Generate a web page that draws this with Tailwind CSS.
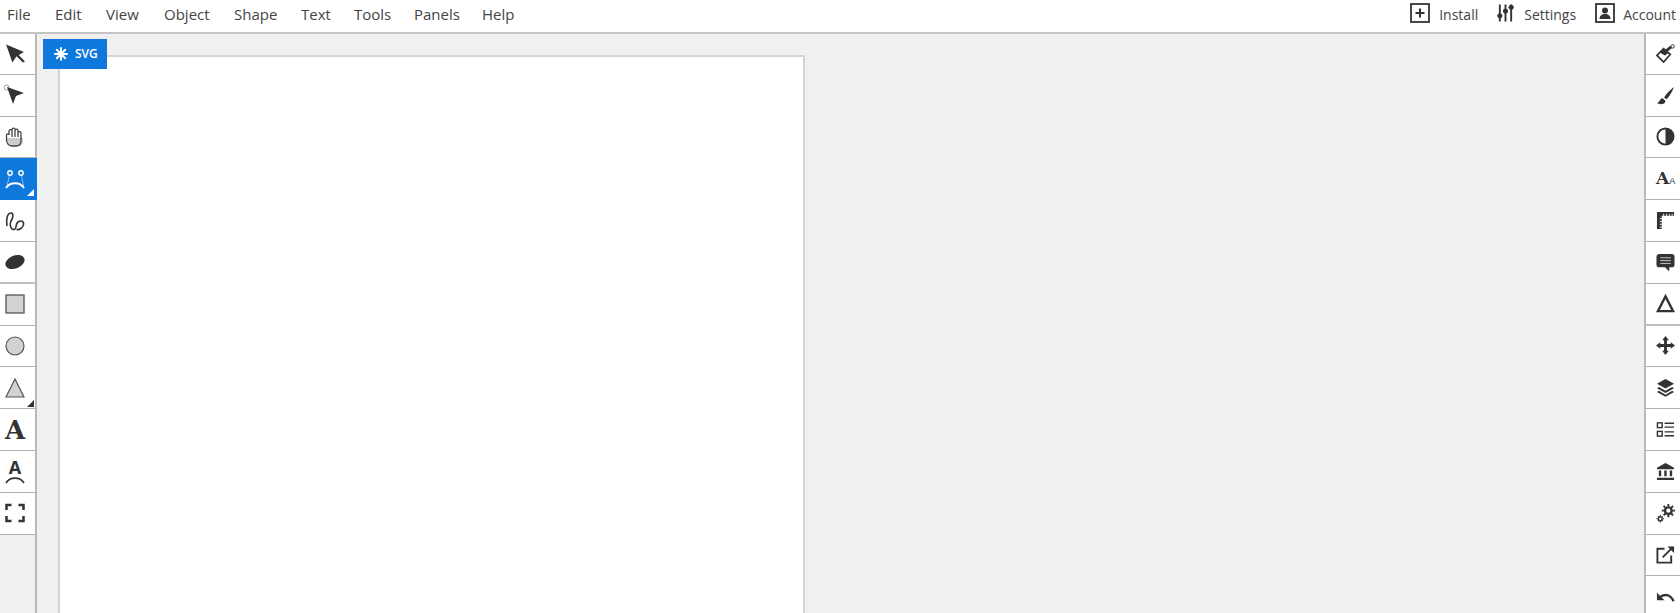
<!DOCTYPE html>
<html lang="en">
<head>
  <meta charset="UTF-8" />
  <title>SVG Editor</title>
  <script src="https://cdn.jsdelivr.net/npm/@tailwindcss/browser@4"></script>
</head>
<body class="h-[613px] overflow-hidden bg-[#f0f0f0] font-['Open_Sans','Noto_Sans',sans-serif] text-[#444]">

  <!-- Top menu -->
  <header class="h-[34px] pb-[4px] bg-white border-b-2 border-[#c4c4c4] flex items-center justify-between text-[15px]">
    <nav class="flex pl-[7px]">
      <a class="w-[48px]">File</a>
      <a class="w-[51px]">Edit</a>
      <a class="w-[58px]">View</a>
      <a class="w-[70px]">Object</a>
      <a class="w-[67px]">Shape</a>
      <a class="w-[53px]">Text</a>
      <a class="w-[60px]">Tools</a>
      <a class="w-[68px]">Panels</a>
      <a>Help</a>
    </nav>
    <div class="flex items-center text-[14px] pr-[4px]">
      <svg class="w-[20px] h-[20px] mr-[9px] mb-[2px]" viewBox="0 0 20 20" fill="none" stroke="#333"><rect x="1" y="1" width="18" height="18" stroke-width="1.800"/><path d="M10 5.500v9M5.500 10h9" stroke-width="2"/></svg>
      <span class="mr-[19px]">Install</span>
      <svg class="w-[17px] h-[20px] mr-[10px] mb-[2px]" viewBox="0 0 18 20" fill="#333" stroke="#333"><path d="M3 1v18M9 1v18M15 1v18" stroke-width="2"/><circle cx="3" cy="13" r="2.300"/><circle cx="9" cy="8" r="2.300"/><circle cx="15" cy="4" r="2.300"/></svg>
      <span class="mr-[19px]">Settings</span>
      <svg class="w-[20px] h-[20px] mr-[8px] mb-[2px]" viewBox="0 0 20 20" fill="#333"><rect x="1" y="1" width="18" height="18" fill="none" stroke="#333" stroke-width="1.800"/><circle cx="10" cy="7.500" r="3"/><path d="M4.500 16c0-3.500 2.500-5 5.500-5s5.500 1.500 5.500 5z"/></svg>
      <span>Account</span>
    </div>
  </header>

  <div class="flex h-[579px]">
    <!-- Left tools -->
    <aside class="w-[37px] shrink-0 border-r-2 border-[#b8b8b8]">
      <div class="h-[40.8px] bg-white border-b border-[#b0b0b0] flex items-center pl-[4px]">
        <svg class="w-[21px] h-[21px]" viewBox="0 0 20 20" fill="#333"><path d="M2 1.500L19 8.500 14 11.500 20 17.500 18 18.500 12 12.500 8 18.500z"/></svg>
      </div>
      <div class="h-[41.8px] bg-white border-b border-[#b0b0b0] flex items-center pl-[3px]">
        <svg class="w-[22px] h-[22px]" viewBox="0 0 22 22"><circle cx="3.500" cy="3.500" r="2.500" fill="none" stroke="#999" stroke-width="1"/><path d="M4 3L21 9 13 12 10 20z" fill="#333"/></svg>
      </div>
      <div class="h-[41.8px] bg-white border-b border-[#b0b0b0] flex items-center pl-[5px]">
        <svg class="w-[20px] h-[20px]" viewBox="0 0 20 20">
          <path d="M1.500 10V8c0-1.500 2.500-1.500 2.500 0V4c0-1.800 3-1.800 3 0V2.500c0-1.800 3-1.800 3 0v1c0-1.800 3-1.800 3 0V6c0-1.800 3-1.800 3 0v8c0 3-2 5-5 5H7c-3.500 0-5.500-3-5.500-6z" fill="#fff"/>
          <path d="M2 11h16v3c0 3-2 5-5 5H7c-3 0-5-3-5-6z" fill="#ccc"/>
          <path d="M1.500 10V8c0-1.500 2.500-1.500 2.500 0V4c0-1.800 3-1.800 3 0V2.500c0-1.800 3-1.800 3 0v1c0-1.800 3-1.800 3 0V6c0-1.800 3-1.800 3 0v8c0 3-2 5-5 5H7c-3.500 0-5.500-3-5.500-6zM7 4v6M10 3v7M13 3.500V10" fill="none" stroke="#444" stroke-width="1.300"/>
        </svg>
      </div>
      <div class="relative h-[41.8px] w-[37px] bg-[#0f78dc] border-b border-[#0f78dc] flex items-center pl-[5px]">
        <svg class="w-[20px] h-[20px]" viewBox="0 0 20 20" fill="none" stroke="#fff" stroke-width="1.400"><circle cx="5" cy="4" r="2.200"/><circle cx="16" cy="4" r="2.200"/><path d="M1 19C5 12.500 15 12.500 19 19" stroke-width="2"/><path d="M4.500 6.500L2 17M16.500 6.500L18.500 17" stroke-width=".5"/></svg>
        <span class="absolute right-[3px] bottom-[3px] w-0 h-0 border-l-[7px] border-l-transparent border-b-[7px] border-b-white"></span>
      </div>
      <div class="h-[41.8px] bg-white border-b border-[#b0b0b0] flex items-center pl-[5px]">
        <svg class="w-[20px] h-[20px]" viewBox="0 0 20 20" fill="none" stroke="#333" stroke-width="1.600"><path d="M2 15C1 9 2 2 6 2c3 0 2 5 0 8-2 4 0 9 3.500 8.500 2.500-.5.5-5.500 3.500-7.500 3-2 6-1 5.500 2.500-.5 3.500-4.500 5.500-7 5"/></svg>
      </div>
      <div class="h-[41.8px] bg-white border-b-2 border-[#c0c0c0] flex items-center pl-[5px]">
        <svg class="w-[20px] h-[20px]" viewBox="0 0 20 20" fill="#333"><ellipse cx="10" cy="10" rx="10" ry="6.500" transform="rotate(-22 10 10)"/></svg>
      </div>
      <div class="h-[41.8px] bg-white border-b border-[#b0b0b0] flex items-center pl-[5px]">
        <svg class="w-[20px] h-[20px]" viewBox="0 0 20 20"><rect x="1" y="1" width="18" height="18" fill="#d2d2d2" stroke="#555" stroke-width="1.300"/></svg>
      </div>
      <div class="h-[41.8px] bg-white border-b border-[#b0b0b0] flex items-center pl-[5px]">
        <svg class="w-[20px] h-[20px]" viewBox="0 0 20 20"><circle cx="10" cy="10" r="9" fill="#d2d2d2" stroke="#555" stroke-width="1.200"/></svg>
      </div>
      <div class="relative h-[41.8px] bg-white border-b border-[#b0b0b0] flex items-center pl-[5px]">
        <svg class="w-[20px] h-[20px]" viewBox="0 0 20 20"><path d="M10 1L19 19H1z" fill="#d2d2d2" stroke="#555" stroke-width="1.200"/></svg>
        <span class="absolute right-[1px] bottom-[1px] w-0 h-0 border-l-[7px] border-l-transparent border-b-[7px] border-b-[#333]"></span>
      </div>
      <div class="h-[41.8px] bg-white border-b border-[#b0b0b0] flex items-center justify-center pr-[5px]">
        <span class="font-['DejaVu_Serif',serif] font-bold text-[26px] leading-none text-[#333]">A</span>
      </div>
      <div class="h-[41.8px] bg-white border-b border-[#b0b0b0] flex flex-col items-center justify-center pr-[5px]">
        <span class="font-bold text-[18px] leading-[17px] text-[#333]">A</span>
        <svg class="w-[20px] h-[8px]" viewBox="0 0 20 8" fill="none" stroke="#333" stroke-width="1.600"><path d="M1 7C5 .5 15 .5 19 7"/></svg>
      </div>
      <div class="h-[41.8px] bg-white border-b border-[#b0b0b0] flex items-center pl-[5px]">
        <svg class="w-[20px] h-[20px]" viewBox="0 0 20 20" fill="none" stroke="#333" stroke-width="2.500"><path d="M1.500 7V2h5M13.500 2h5v5M18.500 13v5h-5M6.500 18h-5v-5"/></svg>
      </div>
    </aside>

    <!-- Canvas area -->
    <main class="flex-1 pl-[21px] pt-[21px] relative overflow-hidden">
      <div class="w-[747px] h-[600px] bg-white border-2 border-[#d4d4d4]"></div>
      <div class="absolute left-[6px] top-[5px] w-[64px] h-[30px] bg-[#0f78dc] flex items-center pl-[11px] gap-[7px] text-white text-[12px] font-semibold">
        <svg class="w-[14px] h-[14px]" viewBox="0 0 14 14" stroke="#fff" stroke-width="2" stroke-linecap="round"><path d="M7 1v12M1 7h12M2.800 2.800l8.400 8.400M2.800 11.200l8.400-8.400"/></svg>
        <span>SVG</span>
      </div>
    </main>

    <!-- Right panels -->
    <aside class="w-[36px] shrink-0 bg-white border-l-2 border-[#b8b8b8] overflow-hidden">
      <div class="h-[40.8px] border-b border-[#b0b0b0] flex items-center pl-[10px]">
        <svg class="w-[19px] h-[19px]" viewBox="0 0 20 20"><path d="M1 12L8 5 15 11 8 19z" fill="#fff" stroke="#333" stroke-width="1.800"/><path d="M4 9L8 5 13 9.500 9.500 12z" fill="#333"/><path d="M11 7L16 3" stroke="#333" stroke-width="3"/><circle cx="17.500" cy="2.500" r="1.800" fill="none" stroke="#333"/></svg>
      </div>
      <div class="h-[41.8px] border-b border-[#b0b0b0] flex items-center pl-[10px]">
        <svg class="w-[19px] h-[19px]" viewBox="0 0 20 20" fill="#333"><path d="M19 1C15 4 11 8 8.500 12l2.500 2C14 11 17 6 19 1zM7 13c-3 0-2.500 4-6 5 3 2 9 1.500 9-2.500z"/></svg>
      </div>
      <div class="h-[41.8px] border-b border-[#b0b0b0] flex items-center pl-[10px]">
        <svg class="w-[19px] h-[19px]" viewBox="0 0 20 20"><circle cx="10" cy="10" r="8.500" fill="#fff" stroke="#333" stroke-width="2"/><path d="M10 1.500a8.500 8.500 0 0 1 0 17z" fill="#333"/></svg>
      </div>
      <div class="h-[41.8px] border-b border-[#b0b0b0] flex items-end pl-[10px] pb-[12px] text-[#333]">
        <span class="font-['DejaVu_Serif',serif] font-bold text-[17px] leading-[18px]">A</span><span class="font-['Liberation_Sans',sans-serif] text-[9px] leading-[12px]">A</span>
      </div>
      <div class="h-[41.8px] border-b border-[#b0b0b0] flex items-center pl-[10px]">
        <svg class="w-[19px] h-[19px]" viewBox="0 0 20 20" fill="#333"><path d="M1 1h18v4H6v14H1z"/><path d="M8 5V3M11 5V3M14 5V3M17 5V3M6 8H4M6 11H4M6 14H4M6 17H4" stroke="#fff" stroke-width="1"/></svg>
      </div>
      <div class="h-[41.8px] border-b border-[#b0b0b0] flex items-center pl-[10px]">
        <svg class="w-[19px] h-[19px]" viewBox="0 0 20 20"><path d="M3.500 1h13A3 3 0 0 1 19.500 4v8a3 3 0 0 1-3 3H14v4.500L9.500 15h-6a3 3 0 0 1-3-3V4a3 3 0 0 1 3-3z" fill="#333"/><path d="M4.500 5h11M4.500 8h11M4.500 11h11" stroke="#ddd" stroke-width=".9"/></svg>
      </div>
      <div class="h-[41.8px] border-b-2 border-[#c0c0c0] flex items-center pl-[10px]">
        <svg class="w-[19px] h-[19px]" viewBox="0 0 20 20" fill="none" stroke="#333" stroke-width="2.500"><path d="M10 2.500L18 18H2z"/></svg>
      </div>
      <div class="h-[41.8px] border-b border-[#b0b0b0] flex items-center pl-[10px]">
        <svg class="w-[19px] h-[19px]" viewBox="0 0 20 20" fill="#333"><path d="M10 0l3.500 4.500h-2v4h4v-2L20 10l-4.500 3.500v-2h-4v4h2L10 20l-3.500-4.500h2v-4h-4v2L0 10l4.500-3.500v2h4v-4h-2z"/></svg>
      </div>
      <div class="h-[41.8px] border-b border-[#b0b0b0] flex items-center pl-[10px]">
        <svg class="w-[19px] h-[19px]" viewBox="0 0 20 20" fill="#333"><path d="M10 1l9 5-9 5-9-5z"/><path d="M3 9.500l7 4 7-4 2 1.200-9 5-9-5zM3 13.500l7 4 7-4 2 1.200-9 5-9-5z"/></svg>
      </div>
      <div class="h-[41.8px] border-b border-[#b0b0b0] flex items-center pl-[10px]">
        <svg class="w-[19px] h-[19px]" viewBox="0 0 20 20" fill="none" stroke="#333" stroke-width="1.500"><rect x="1.500" y="3" width="5" height="5"/><rect x="1.500" y="12" width="5" height="5"/><path d="M9 3.500h10M9 7.500h10M9 12.500h10M9 16.500h10"/></svg>
      </div>
      <div class="h-[41.8px] border-b border-[#b0b0b0] flex items-center pl-[10px]">
        <svg class="w-[19px] h-[19px]" viewBox="0 0 20 20" fill="#333"><path d="M10 1l9 5v1.500H1V6z"/><path d="M3 9h2.500v6H3zM8.700 9h2.500v6H8.700zM14.500 9H17v6h-2.500zM1 16.500h18V19H1z"/></svg>
      </div>
      <div class="h-[41.8px] border-b border-[#b0b0b0] flex items-center pl-[10px]">
        <svg class="w-[19px] h-[19px]" viewBox="0 0 20 20" fill="none" stroke="#333"><circle cx="13" cy="7" r="3.500" stroke-width="2.500"/><path d="M13 0v2.500M13 11.500V14M6 7h2.500M17.500 7H20M8 2l2 2M16 10l2 2M18 2l-2 2M10 10l-2 2" stroke-width="2"/><circle cx="4.500" cy="15.500" r="2" stroke-width="1.500"/><path d="M4.500 11.500v1.500M4.500 18v1.500M.5 15.500H2M7 15.500h1.500M2 13l1 1M6 17l1 1M7 13l-1 1M3 17l-1 1" stroke-width="1.200"/></svg>
      </div>
      <div class="h-[41.8px] border-b border-[#b0b0b0] flex items-center pl-[10px]">
        <svg class="w-[19px] h-[19px]" viewBox="0 0 20 20" fill="none" stroke="#333" stroke-width="2"><path d="M9 4H1.500v14.500H16V11"/><path d="M7 13L17 3"/><path d="M12 1.500h7v7z" fill="#333" stroke="none"/></svg>
      </div>
      <div class="h-[41.8px] border-b border-[#b0b0b0] flex items-center pl-[10px]">
        <svg class="w-[19px] h-[19px]" viewBox="0 0 20 20"><path d="M1 6v8h8z" fill="#333"/><path d="M4 11C8 7 15 7 18.500 15" fill="none" stroke="#333" stroke-width="2.500"/></svg>
      </div>
    </aside>
  </div>
</body>
</html>
